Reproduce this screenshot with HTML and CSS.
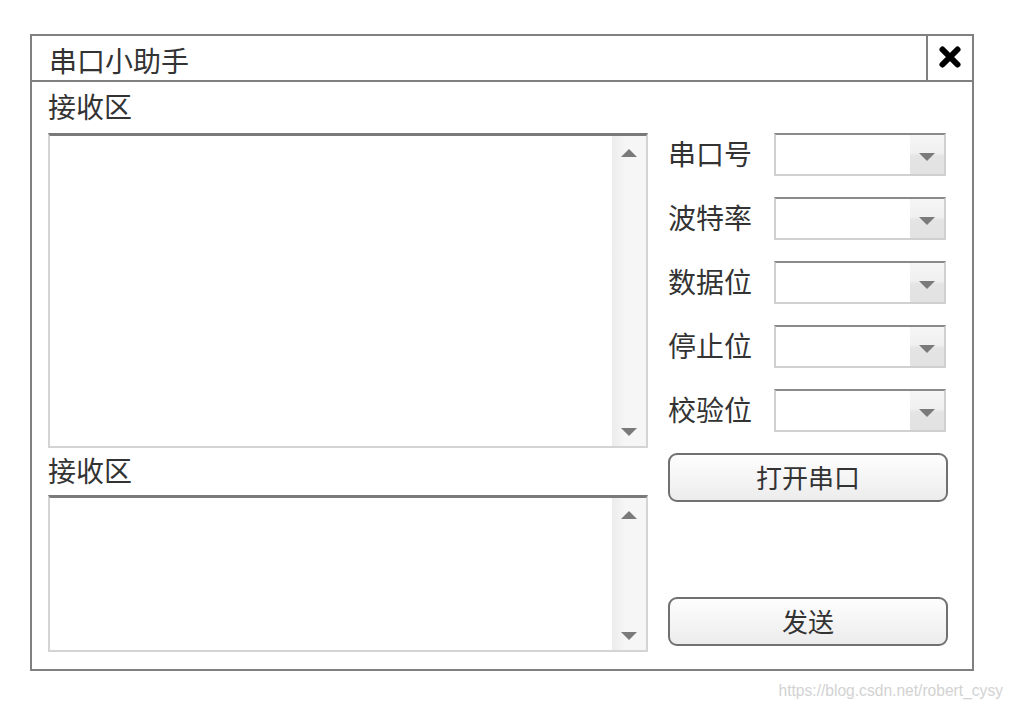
FILE: index.html
```html
<!DOCTYPE html>
<html lang="zh-CN">
<head>
    <meta charset="UTF-8">
    <title>串口小助手</title>
    <link rel="stylesheet" href="styles.css">
</head>
<body>
    <div class="window">
        <div class="title-bar">
            <div class="title">串口小助手</div>
            <div class="close-btn">
                <svg width="24" height="24" viewBox="0 0 24 24">
                    <path d="M4.5 4.5 L19.5 19.5 M19.5 4.5 L4.5 19.5" stroke="#000" stroke-width="6" stroke-linecap="round"/>
                </svg>
            </div>
        </div>

        <div class="content">
            <div class="left-col">
                <div class="area-label">接收区</div>
                <div class="text-box receive">
                    <div class="scrollbar">
                        <span class="arrow-up"></span>
                        <span class="arrow-down"></span>
                    </div>
                </div>
                <div class="area-label second">接收区</div>
                <div class="text-box send">
                    <div class="scrollbar">
                        <span class="arrow-up"></span>
                        <span class="arrow-down"></span>
                    </div>
                </div>
            </div>

            <div class="right-col">
                <div class="field">
                    <span class="field-label">串口号</span>
                    <div class="select"><div class="select-btn"><span class="arrow-down"></span></div></div>
                </div>
                <div class="field">
                    <span class="field-label">波特率</span>
                    <div class="select"><div class="select-btn"><span class="arrow-down"></span></div></div>
                </div>
                <div class="field">
                    <span class="field-label">数据位</span>
                    <div class="select"><div class="select-btn"><span class="arrow-down"></span></div></div>
                </div>
                <div class="field">
                    <span class="field-label">停止位</span>
                    <div class="select"><div class="select-btn"><span class="arrow-down"></span></div></div>
                </div>
                <div class="field">
                    <span class="field-label">校验位</span>
                    <div class="select"><div class="select-btn"><span class="arrow-down"></span></div></div>
                </div>

                <button class="btn open-btn">打开串口</button>
                <button class="btn send-btn">发送</button>
            </div>
        </div>
    </div>

    <div class="watermark">https://blog.csdn.net/robert_cysy</div>
</body>
</html>
```

FILE: styles.css
```css
* {
    margin: 0;
    padding: 0;
    box-sizing: border-box;
}

body {
    font-family: "Noto Sans CJK SC", "Noto Sans", sans-serif;
    background: #fff;
    color: #333;
    width: 1014px;
    height: 710px;
    padding: 34px 0 0 30px;
}

.window {
    width: 944px;
    height: 637px;
    border: 2px solid #808080;
    display: flex;
    flex-direction: column;
}

.title-bar {
    height: 46px;
    border-bottom: 2px solid #808080;
    display: flex;
}

.title {
    flex: 1;
    font-size: 28px;
    line-height: 44px;
    padding: 2px 0 0 17px;
}

.close-btn {
    width: 46px;
    border-left: 2px solid #808080;
    display: flex;
    align-items: center;
    justify-content: center;
    padding-bottom: 2px;
}

.content {
    flex: 1;
    display: flex;
    padding: 0 0 0 16px;
}

.left-col {
    width: 600px;
    display: flex;
    flex-direction: column;
}

.area-label {
    font-size: 28px;
    height: 51px;
    line-height: 48px;
}

.area-label.second {
    height: 47px;
    line-height: 44px;
}

.text-box {
    border: 2px solid #d4d4d4;
    border-top: 3px solid #7a7a7a;
    background: #fff;
    display: flex;
    justify-content: flex-end;
}

.text-box.receive {
    height: 315px;
}

.text-box.send {
    height: 157px;
}

.scrollbar {
    width: 34px;
    background: linear-gradient(to right, #ececec, #f6f6f6 40%, #f6f6f6);
    display: flex;
    flex-direction: column;
    justify-content: space-between;
    align-items: center;
    padding: 13px 0 10px;
}

.arrow-up {
    width: 0;
    height: 0;
    border-left: 8px solid transparent;
    border-right: 8px solid transparent;
    border-bottom: 8px solid #7a7a7a;
}

.arrow-down {
    width: 0;
    height: 0;
    border-left: 8px solid transparent;
    border-right: 8px solid transparent;
    border-top: 8px solid #7a7a7a;
}

.right-col {
    width: 280px;
    margin-left: 20px;
    display: flex;
    flex-direction: column;
    padding-top: 51px;
}

.field {
    display: flex;
    align-items: center;
    height: 43px;
    margin-bottom: 21px;
}

.field-label {
    font-size: 28px;
    width: 106px;
    line-height: 1;
    padding-bottom: 3px;
}

.select {
    width: 172px;
    height: 43px;
    border: 2px solid #d0d0d0;
    border-top: 2px solid #8a8a8a;
    background: #fff;
    display: flex;
    justify-content: flex-end;
}

.select-btn {
    width: 34px;
    background: linear-gradient(to bottom, #f6f6f6, #f0f0f0 45%, #e4e4e4 55%, #e2e2e2);
    display: flex;
    align-items: center;
    justify-content: center;
    padding-top: 4px;
}

.btn {
    font-family: inherit;
    font-size: 26px;
    color: #333;
    height: 49px;
    width: 280px;
    border: 2px solid #707070;
    border-radius: 9px;
    background: linear-gradient(to bottom, #fefefe, #ececec);
    line-height: 1;
    padding-bottom: 2px;
}

.send-btn {
    margin-top: 95px;
}

.watermark {
    text-align: right;
    padding-right: 11px;
    margin-top: 11px;
    font-family: "Liberation Sans", Arial, sans-serif;
    font-size: 15.6px;
    color: #d2d2d2;
}
```
